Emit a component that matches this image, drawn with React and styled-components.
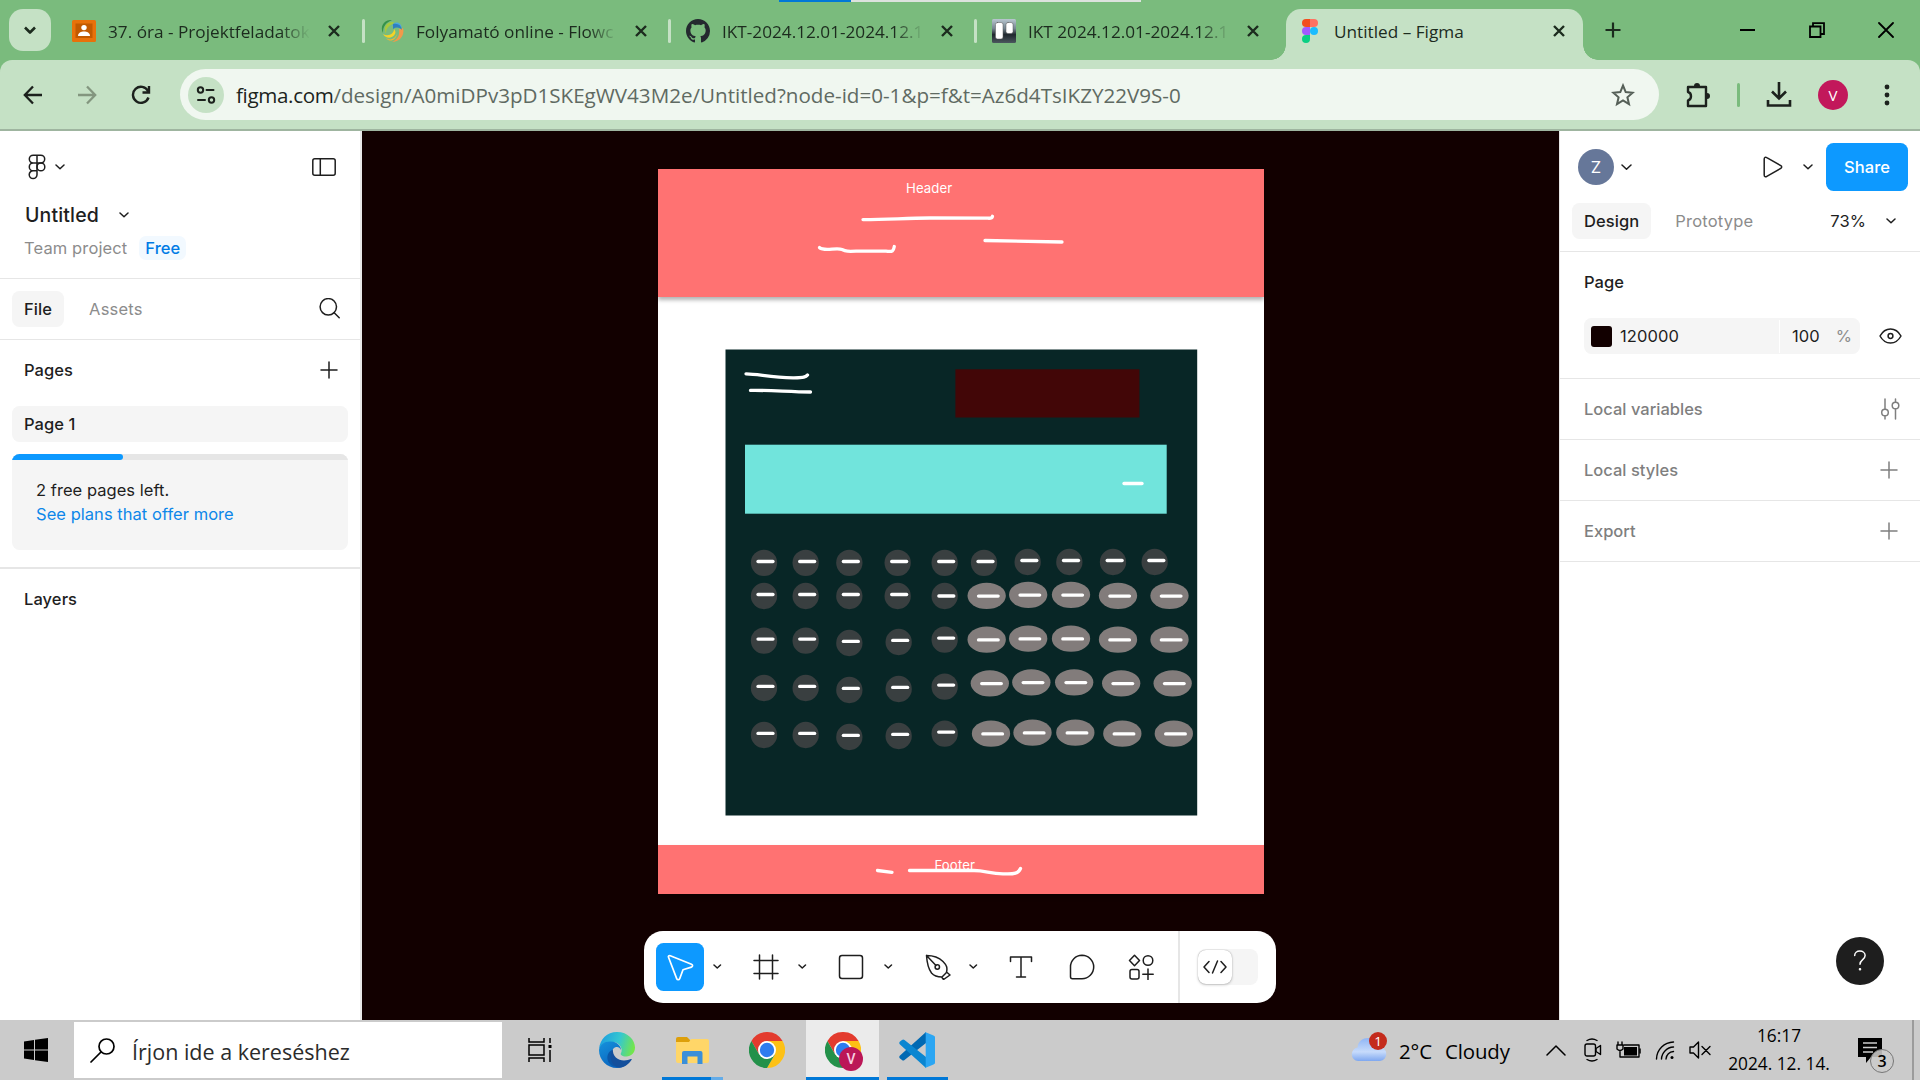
import React from "react";
import styled, { createGlobalStyle } from "styled-components";

const GlobalStyle = createGlobalStyle`
  *, *::before, *::after { box-sizing: border-box; }
  html, body { margin: 0; padding: 0; overflow: hidden; }
  svg { display: block; flex: none; }
`;

const system = `"Open Sans", "Noto Sans", sans-serif`;
const inter = `Inter, "Liberation Sans", sans-serif`;

const Screen = styled.div`
  width: 1920px;
  height: 1080px;
  display: flex;
  flex-direction: column;
  background: #fff;
  overflow: hidden;
`;

/* ---------- Browser chrome ---------- */

const TabStrip = styled.header`
  position: relative;
  display: flex;
  height: 60px;
  flex: none;
  background: #7abb7d;
  font-family: ${system};
`;

const ShareStrip = styled.div`
  position: absolute;
  top: 0;
  left: 779px;
  width: 362px;
  height: 2px;
  background: linear-gradient(to right, #0078d7 72px, #dde2de 72px);
`;

const TabSearch = styled.div`
  width: 42px;
  height: 42px;
  margin: 9px 9px 0;
  display: flex;
  align-items: center;
  justify-content: center;
  border-radius: 14px;
  background: #c5e1c5;
`;

const Tab = styled.div`
  position: relative;
  flex: none;
  width: 306px;
  padding-top: 9px;
`;

const TabBody = styled.div`
  position: relative;
  display: flex;
  align-items: center;
  height: ${(p) => (p.$active ? 51 : 43)}px;
  margin: 0 7px 0 2px;
  padding-left: ${(p) => (p.$first ? 10 : 12)}px;
  border-radius: 15px 15px 0 0;
  background: ${(p) => (p.$active ? "#c5e1c5" : "transparent")};
  padding-bottom: ${(p) => (p.$active ? 8 : 0)}px;
  &::before, &::after {
    content: "";
    display: ${(p) => (p.$active ? "block" : "none")};
    position: absolute;
    bottom: 0;
    width: 15px;
    height: 15px;
  }
  &::before { left: -15px; background: radial-gradient(circle at 0 0, transparent 14.5px, #c5e1c5 15px); }
  &::after { right: -15px; background: radial-gradient(circle at 100% 0, transparent 14.5px, #c5e1c5 15px); }
`;

const TabTitle = styled.div`
  flex: none;
  width: ${(p) => (p.$first ? 201 : 200)}px;
  margin: 2px 18px 0 12px;
  white-space: nowrap;
  font-size: 17.2px;
  line-height: 26px;
  color: #1c2b1e;
  -webkit-mask-image: ${(p) => (p.$fade ? "linear-gradient(to right, #000 172px, transparent 202px)" : "none")};
`;

const Favicon = styled.div`
  flex: none;
  width: 24px;
  height: 24px;
  display: flex;
  align-items: center;
  justify-content: center;
`;

const TabDivider = styled.div`
  position: absolute;
  left: 302px;
  top: 19px;
  width: 3px;
  height: 24px;
  border-radius: 2px;
  background: #c5e1c5;
`;

const NewTab = styled.div`
  width: 46px;
  height: 60px;
  display: flex;
  align-items: center;
  justify-content: center;
`;

const WindowButtons = styled.div`
  display: flex;
  margin-left: auto;
`;

const WindowButton = styled.div`
  width: 69px;
  height: 60px;
  display: flex;
  align-items: center;
  justify-content: center;
`;

const ToolbarBack = styled.div`
  flex: none;
  position: relative;
  z-index: 1;
  background: #7abb7d;
  box-shadow: 0 1px 0 #9fb5a0;
`;

const AddressRow = styled.div`
  display: flex;
  align-items: center;
  height: 70px;
  padding-left: 6px;
  border-bottom: 1px solid #9fb5a0;
  border-radius: 12px 12px 0 0;
  background: #c5e1c5;
  font-family: ${system};
`;

const NavButton = styled.div`
  flex: none;
  width: ${(p) => p.$w || 54}px;
  margin-left: ${(p) => p.$ml || 0}px;
  display: flex;
  align-items: center;
  justify-content: center;
`;

const Omnibox = styled.div`
  flex: none;
  display: flex;
  align-items: center;
  width: 1479px;
  height: 51px;
  margin-left: 12px;
  padding: 0 24px 0 8px;
  border-radius: 26px;
  background: #f0f7f0;
`;

const SiteInfo = styled.div`
  width: 36px;
  height: 36px;
  display: flex;
  align-items: center;
  justify-content: center;
  border-radius: 50%;
  background: #c5e1c5;
`;

const Url = styled.div`
  flex: 1;
  margin-left: 12px;
  font-size: 20.6px;
  line-height: 30px;
  color: #5f6a62;
  white-space: nowrap;
  b { font-weight: 400; color: #1b241d; letter-spacing: -0.35px; }
`;

const BarDivider = styled.div`
  flex: none;
  width: 3px;
  height: 24px;
  margin-left: 24px;
  border-radius: 2px;
  background: #7abb7d;
`;

const ProfileBadge = styled.div`
  flex: none;
  width: 30px;
  height: 30px;
  margin-left: 26px;
  border-radius: 50%;
  background: #c2185b;
  color: #fff;
  font: 15px/30px ${system};
  text-align: center;
`;

/* ---------- Editor ---------- */

const Editor = styled.main`
  display: flex;
  height: 890px;
  flex: none;
  font-family: ${inter};
  font-size: 16.5px;
  letter-spacing: 0.08px;
  color: #1e1e1e;
`;

const LeftPanel = styled.aside`
  width: 362px;
  flex: none;
  background: #fff;
  border-right: 2px solid #e9e9e9;
`;

const RightPanel = styled.aside`
  position: relative;
  width: 361px;
  flex: none;
  background: #fff;
  border-left: 1px solid #e6e6e6;
`;

const Row = styled.div`
  display: flex;
  align-items: center;
  height: ${(p) => p.$h}px;
  margin-top: ${(p) => p.$mt || 0}px;
  padding: 0 ${(p) => p.$pr || 0}px ${(p) => p.$pb || 0}px ${(p) => p.$pl || 0}px;
  border-bottom: ${(p) => (p.$line ? `${p.$line}px solid #e6e6e6` : "none")};
  gap: ${(p) => p.$gap || 0}px;
`;

const Spacer = styled.div`
  flex: 1;
`;

const FileHead = styled.div`
  height: 149px;
  padding-top: 18px;
  border-bottom: 1px solid #e6e6e6;
`;

const FileName = styled.div`
  font-size: 19.5px;
  font-weight: 500;
  letter-spacing: 0.15px;
`;

const Muted = styled.span`
  color: ${(p) => (p.$soft ? "#8c8c8c" : "#7f7f7f")};
  font-weight: ${(p) => p.$weight || 400};
  letter-spacing: ${(p) => p.$ls ?? 0.12}px;
`;

const Strong = styled.span`
  font-weight: 500;
`;

const FreeBadge = styled.span`
  height: 24px;
  padding: 0 6px;
  border-radius: 7px;
  background: #f2f9ff;
  color: #007be5;
  line-height: 24px;
  font-weight: 450;
`;

const Pill = styled.span`
  height: 36px;
  padding: 0 12px;
  border-radius: 7.5px;
  background: #f5f5f5;
  font-weight: 500;
  line-height: 36px;
`;

const PageItem = styled.div`
  height: 36px;
  margin: 7px 12px 12px;
  padding: 0 12px;
  border-radius: 7.5px;
  background: #f5f5f5;
  font-weight: 500;
  line-height: 36px;
`;

const PlanCard = styled.div`
  height: 96px;
  margin: 0 12px;
  border-radius: 7.5px;
  overflow: hidden;
  background: #f5f5f5;
`;

const Meter = styled.div`
  height: 6px;
  background: #e6e6e6;
`;

const MeterFill = styled.div`
  width: 33%;
  height: 6px;
  border-radius: 0 4px 4px 0;
  background: #0d99ff;
`;

const PlanText = styled.p`
  margin: 18px 24px 0;
  line-height: 24px;
  letter-spacing: 0.04px;
  a { display: block; color: #0d87e9; }
`;

const PagesBlock = styled.section`
  height: 229px;
  border-bottom: 2px solid #e6e6e6;
`;

const UserBadge = styled.div`
  width: 36px;
  height: 36px;
  border-radius: 50%;
  background: #667799;
  color: #fff;
  font-size: 16.5px;
  line-height: 36px;
  text-align: center;
`;

const PlayButton = styled.div`
  margin-right: 7px;
`;

const ZoomLevel = styled.div`
  display: flex;
  align-items: center;
  gap: 20px;
`;

const ShareButton = styled.div`
  width: 82px;
  height: 48px;
  border-radius: 7.5px;
  background: #0d99ff;
  color: #fff;
  font-weight: 500;
  line-height: 48px;
  text-align: center;
`;

const PageBlock = styled.section`
  height: 127px;
  border-bottom: 1px solid #e6e6e6;
`;

const ColorField = styled.div`
  display: flex;
  align-items: center;
  width: 276px;
  height: 36px;
  border-radius: 7.5px;
  background: #f5f5f5;
`;

const Swatch = styled.div`
  width: 21px;
  height: 21px;
  margin: 0 8px 0 7px;
  border-radius: 3px;
  background: #120000;
`;

const Hex = styled.div`
  width: 159px;
`;

const Opacity = styled.div`
  display: flex;
  gap: 16px;
  padding-left: 12px;
  height: 33px;
  align-items: center;
  border-left: 1px solid #fff;
`;

const Help = styled.div`
  position: absolute;
  right: 36px;
  bottom: 35px;
  width: 48px;
  height: 48px;
  display: flex;
  align-items: center;
  justify-content: center;
  border-radius: 50%;
  background: #1e1e1e;
`;

/* ---------- Canvas ---------- */

const Canvas = styled.div`
  position: relative;
  flex: 1;
  background: #120000;
  overflow: hidden;
`;

const Artboard = styled.div`
  position: absolute;
  left: 296px;
  top: 39px;
  width: 606px;
  height: 724.5px;
  background: #fff;
`;

const Band = styled.div`
  position: absolute;
  left: 0;
  top: ${(p) => p.$top}px;
  width: 606px;
  height: ${(p) => p.$h}px;
  background: #ff7272;
  box-shadow: 0 3px 4px rgba(0, 0, 0, 0.3);
`;

const BandLabel = styled.div`
  position: absolute;
  left: ${(p) => p.$x}px;
  top: ${(p) => p.$y}px;
  color: #fff;
  font-size: 13.2px;
  line-height: 16px;
  letter-spacing: 0.1px;
`;

const Sketch = styled.svg`
  position: absolute;
  left: 0;
  top: 0;
`;

const ToolDock = styled.div`
  position: absolute;
  left: 282px;
  top: 801px;
  display: flex;
  align-items: center;
  width: 632px;
  height: 72px;
  padding-left: 12px;
  border-radius: 19px;
  background: #fff;
`;

const Tool = styled.div`
  flex: none;
  width: 48px;
  height: 48px;
  display: flex;
  align-items: center;
  justify-content: center;
  border-radius: 7.5px;
  margin-right: ${(p) => p.$mr || 0}px;
  background: ${(p) => (p.$active ? "#0d99ff" : "transparent")};
`;

const ToolMore = styled.div`
  flex: none;
  width: ${(p) => p.$w || 25}px;
  margin-right: ${(p) => p.$mr || 12}px;
  display: flex;
  justify-content: center;
`;

const DockDivider = styled.div`
  width: 2px;
  height: 72px;
  margin-left: 13px;
  background: #e6e6e6;
`;

const DevToggle = styled.div`
  width: 60px;
  height: 36px;
  margin-left: 18px;
  border-radius: 8px;
  background: #f5f5f5;
  display: flex;
  align-items: center;
`;

const DevKnob = styled.div`
  width: 34px;
  height: 34px;
  display: flex;
  align-items: center;
  justify-content: center;
  border-radius: 8px;
  background: #fff;
  box-shadow: 0 0 1px rgba(0, 0, 0, 0.35), 0 1px 3px rgba(0, 0, 0, 0.2);
`;

/* ---------- Taskbar ---------- */

const Taskbar = styled.footer`
  display: flex;
  height: 60px;
  flex: none;
  background: #cbcbcb;
  font-family: ${system};
  color: #000;
`;

const TaskCell = styled.div`
  position: relative;
  flex: none;
  width: ${(p) => p.$w}px;
  height: 60px;
  padding-right: ${(p) => p.$pr || 0}px;
  display: flex;
  align-items: center;
  justify-content: center;
  background: ${(p) => (p.$active ? "#ebebeb" : "transparent")};
`;

const Underline = styled.div`
  position: absolute;
  bottom: 0;
  left: ${(p) => p.$x || 0}px;
  width: ${(p) => p.$w}px;
  height: 3px;
  background: ${(p) => (p.$soft ? "#64ace8" : "#0078d7")};
`;

const AccountMark = styled.svg`
  position: absolute;
  left: 33px;
  top: 27px;
`;

const SearchBox = styled.div`
  flex: none;
  display: flex;
  align-items: center;
  width: 428px;
  height: 56px;
  margin-top: 2px;
  padding-left: 16px;
  background: #fff;
  color: #2b2b2b;
  font-size: 21.5px;
  gap: 17px;
  span { padding-top: 2px; }
`;

const Tray = styled.div`
  display: flex;
  align-items: center;
  width: 569px;
  margin-left: auto;
  height: 60px;
`;

const WeatherIcon = styled.div`
  flex: none;
  width: 36px;
  height: 60px;
`;

const WeatherText = styled.div`
  flex: none;
  display: flex;
  gap: 13px;
  width: 148px;
  margin-left: 12px;
  margin-top: 2px;
  font-size: 20.4px;
  letter-spacing: -0.1px;
  white-space: nowrap;
`;

const TrayCell = styled.div`
  flex: none;
  width: ${(p) => p.$w}px;
  padding-left: ${(p) => p.$pl || 0}px;
  padding-top: ${(p) => p.$pt || 0}px;
  display: flex;
  justify-content: center;
`;

const Clock = styled.div`
  flex: none;
  width: 110px;
  margin-left: 19px;
  font-size: 17.3px;
  line-height: 28px;
  text-align: center;
  white-space: nowrap;
`;

const ShowDesktop = styled.div`
  width: 8px;
  height: 60px;
  margin-left: auto;
  border-left: 2px solid #9b9b9b;
`;

/* ---------- Icons ---------- */

const Icon = ({ w, h = w, vb, color = "#1e1e1e", sw = 1.5, fill = "none", children }) => (
  <svg
    width={w}
    height={h}
    viewBox={vb || `0 0 ${w} ${h}`}
    fill={fill}
    stroke={color}
    strokeWidth={sw}
    strokeLinecap="round"
    strokeLinejoin="round"
  >
    {children}
  </svg>
);

const Chevron = ({ w = 8, color }) => (
  <Icon w={w + 2} h={w / 2 + 2} color={color}>
    <path d={`M1 1 L${w / 2 + 1} ${w / 2 + 0.7} L${w + 1} 1`} />
  </Icon>
);

const Plus = ({ color }) => (
  <Icon w={18} color={color}>
    <path d="M9 1v16M1 9h16" />
  </Icon>
);

const CloseX = () => (
  <Icon w={14} color="#1c2b1e" sw={2.4}>
    <path d="M2 2l10 10M12 2L2 12" strokeLinecap="butt" />
  </Icon>
);

const ClassroomIcon = () => (
  <Icon w={24} h={22} color="none">
    <rect width="24" height="22" rx="1.5" fill="#e8710a" />
    <rect x="3.5" y="3.5" width="17" height="14.5" fill="#c25a00" />
    <circle cx="12" cy="7.6" r="2.7" fill="#fff" />
    <path d="M6 16c0-3 3-4.4 6-4.4s6 1.400 6 4.400z" fill="#fff" />
  </Icon>
);

const SwirlIcon = () => (
  <Icon w={24} color="none">
    <path d="M12 7C15 1 21 3 22 9c-3-3-6-3-10-2z" fill="#4da7dd" />
    <path d="M10 1C3 2 0 8 3 14c0-6 2-10 9-13z" fill="#35924a" />
    <path d="M13 3C6 3 3 9 6 15c0-5 2-8 8-11z" fill="#a7c93c" />
    <path d="M3 15c3 5 9 5 12 0 1-2 0-4-1-5 0 5-6 8-11 5z" fill="#f5d327" />
    <path d="M23 9c2 7-3 14-11 14 5-2 8-6 7-13 1 0 3 0 4-1z" fill="#f2994a" />
    <path d="M13 5c5-1 8 1 9 6-3-3-6-3-9-1z" fill="#2f7fc1" />
    <path d="M6 19c4 3 9 1 11-4-1 6-7 9-11 4z" fill="#f2b632" />
  </Icon>
);

const GithubIcon = () => (
  <svg width="24" height="24" viewBox="0 0 16 16" fill="#24292f">
    <path d="M8 0C3.580 0 0 3.580 0 8c0 3.540 2.290 6.530 5.470 7.590.4.070.550-.170.550-.380 0-.190-.010-.820-.010-1.490-2.010.370-2.530-.490-2.690-.940-.090-.230-.480-.940-.820-1.130-.280-.150-.680-.520-.010-.530.630-.010 1.080.580 1.230.820.720 1.210 1.870.870 2.330.660.070-.520.280-.870.510-1.070-1.780-.200-3.640-.890-3.640-3.950 0-.870.310-1.590.820-2.150-.080-.200-.360-1.020.080-2.120 0 0 .670-.210 2.200.820.640-.180 1.320-.270 2-.270s1.360.090 2 .270c1.530-1.040 2.200-.820 2.200-.820.440 1.100.160 1.920.080 2.120.510.560.820 1.270.820 2.150 0 3.070-1.870 3.750-3.650 3.950.290.250.540.730.540 1.480 0 1.070-.010 1.930-.010 2.200 0 .210.150.460.550.380A8.010 8.010 0 0 0 16 8c0-4.420-3.580-8-8-8z" />
  </svg>
);

const TrelloIcon = () => (
  <Icon w={24} color="none">
    <defs>
      <linearGradient id="photo" x1="0" y1="0" x2="0" y2="1">
        <stop offset="0" stopColor="#b9c7d0" />
        <stop offset=".4" stopColor="#75858f" />
        <stop offset=".65" stopColor="#20282e" />
        <stop offset="1" stopColor="#4b575e" />
      </linearGradient>
    </defs>
    <rect width="24" height="24" rx="1.5" fill="url(#photo)" />
    <rect x="3.500" y="3.500" width="7.500" height="16.500" rx="2" fill="#fff" stroke="#555" strokeWidth=".5" />
    <rect x="14" y="3.500" width="7" height="11" rx="2" fill="#fff" stroke="#555" strokeWidth=".5" />
  </Icon>
);

const FigmaIcon = () => (
  <Icon w={16} h={24} vb="0 0 16 24" color="none">
    <path d="M4 0h4v8H4a4 4 0 0 1 0-8z" fill="#f24e1e" />
    <path d="M8 0h4a4 4 0 0 1 0 8H8z" fill="#ff7262" />
    <path d="M4 8h4v8H4a4 4 0 0 1 0-8z" fill="#a259ff" />
    <circle cx="12" cy="12" r="4" fill="#1abcfe" />
    <path d="M4 16h4v4a4 4 0 1 1-4-4z" fill="#0acf83" />
  </Icon>
);

const ChromeLogo = () => (
  <svg width="36" height="36" viewBox="0 0 36 36">
    <path d="M18 9 H33.590 A18 18 0 0 1 18 36 L25.800 22.500z" fill="#fdc116" />
    <path d="M2.410 9 A18 18 0 0 1 33.590 9 H18 L10.200 22.500z" fill="#e33b2e" />
    <path d="M2.410 9 L10.200 22.500 L18 27 L25.800 22.500 L18 36 A18 18 0 0 1 2.410 9z" fill="#23914a" />
    <circle cx="18" cy="18" r="9" fill="#fff" />
    <circle cx="18" cy="18" r="7.200" fill="#2d7cee" />
  </svg>
);

const EdgeLogo = () => (
  <svg width="36" height="36" viewBox="0 0 36 36">
    <defs>
      <linearGradient id="eTop" x1="0" y1=".3" x2="1" y2=".5">
        <stop offset="0" stopColor="#1c9de0" />
        <stop offset=".55" stopColor="#35c7d0" />
        <stop offset="1" stopColor="#74e64a" />
      </linearGradient>
      <linearGradient id="eLeft" x1="0" y1="0" x2=".6" y2="1">
        <stop offset="0" stopColor="#1592dc" />
        <stop offset="1" stopColor="#0a62bd" />
      </linearGradient>
    </defs>
    <path d="M0 17C1 7 8 0 18 0c11 0 18 8 18 15.500 0 5.500-4 9-8.500 9-5 0-6.500-2-5.500-3.500 2-3 0-11-9-11C7 10 2 13 0 17z" fill="url(#eTop)" />
    <path d="M0 18C1 12 6 9 12 9.500c7 .5 10 5 10 8.500-1-2.500-3-3.500-5-3-5 1.500-6 9-1 14 3 3.500 8 4.500 12 3.500-3 2.500-7 3.500-10 3.500C8 36 0 28 0 18z" fill="url(#eLeft)" />
    <path d="M13 18c-1.500 8 6 13.500 12 13.500-4 3.500-9 4-13 1.500-5-4-5-12 1-15z" fill="#0b57a8" />
    <path d="M14 17c-1 7 5 11.500 11 11.500 3 0 5-1 7-1.500.5-.3 1 .2.600.8C30 32 25.500 35.500 20 35.800 12 34 9 23 14 17z" fill="#134f9c" />
  </svg>
);

const ExplorerLogo = () => (
  <svg width="33" height="27" viewBox="0 0 33 27">
    <path d="M0 2a2 2 0 0 1 2-2h9l4 4v4H0z" fill="#dd9f0a" />
    <path d="M0 5h13l2-3h16a2 2 0 0 1 2 2v20a2 2 0 0 1-2 2H2a2 2 0 0 1-2-2z" fill="#ffd668" />
    <path d="M6 27V16a2 2 0 0 1 2-2h16.500a2 2 0 0 1 2 2v11h-5v-7.500h-10V27z" fill="#3a8fd9" />
  </svg>
);

const CodeLogo = () => (
  <svg width="36" height="36" viewBox="0 0 36 36">
    <path d="M27 0 1 23.500c-1 1-1 2 0 3l2 1.500c.8.700 1.700.700 2.500 0L27 11z" fill="#0069b3" />
    <path d="M27 36 1 12.500c-1-1-1-2 0-3L3 8c.8-.7 1.700-.7 2.500 0L27 25z" fill="#0a86d1" />
    <path d="M26 0l8.500 3.500c1 .5 1.500 1 1.500 2v25c0 1-.5 1.500-1.500 2L26 36c.6-.8.7-1.300.7-2V2c0-.8-.2-1.300-.7-2z" fill="#2ba6f3" />
  </svg>
);

/* ---------- Data ---------- */

const tabs = [
  { title: "37. óra - Projektfeladatok", icon: <ClassroomIcon /> },
  { title: "Folyamató online - Flowc", icon: <SwirlIcon /> },
  { title: "IKT-2024.12.01-2024.12.1", icon: <GithubIcon /> },
  { title: "IKT 2024.12.01-2024.12.1", icon: <TrelloIcon /> },
  { title: "Untitled – Figma", icon: <FigmaIcon />, active: true },
];

/* Calculator keys: [x, y, dash x, dash y, wide], in thirds of a canvas pixel */
const keys = [
  ...[132, 257, 388, 533, 674, 792].map((x) => [x, 98.5, x + 4.5, 94.5]),
  ...[923, 1048, 1179, 1304].map((x) => [x, 96, x + 5, 91.5]),
  ...[132, 257, 388, 533].map((x) => [x, 198, x + 4.5, 193.5]),
  [674, 198, 679, 198],
];

[
  [332, 332, 339, 336, 329],
  [474, 474, 480, 477, 470],
  [615, 615, 621, 618, 611],
].forEach((ys) => [132, 257, 388, 536, 674].forEach((x, i) => keys.push([x, ys[i], x + 4.5, ys[i] - 4.7])));

[
  [0, 197.5],
  [0, 329],
  [9.5, 460],
  [13, 611],
].forEach(([dx, y]) =>
  [800, 924.5, 1053, 1194, 1348.5].forEach((x, i) => {
    const ky = i === 1 || i === 2 ? y - 3 : y;
    keys.push([x + dx, ky, x + dx + 5, ky + 0.7, true]);
  })
);

/* ---------- Views ---------- */

const BrowserChrome = () => (
  <>
    <TabStrip>
      <ShareStrip />
      <TabSearch>
        <Icon w={14} h={9} color="#1c2b1e" sw={2.6}>
          <path d="M2 1.500l5 5 5-5" strokeLinecap="butt" />
        </Icon>
      </TabSearch>
      {tabs.map((t, i) => (
        <Tab key={t.title}>
          <TabBody $active={t.active} $first={i === 0}>
            <Favicon>{t.icon}</Favicon>
            <TabTitle $fade={!t.active} $first={i === 0}>{t.title}</TabTitle>
            <CloseX />
          </TabBody>
          {i < 3 && <TabDivider />}
        </Tab>
      ))}
      <NewTab>
        <Icon w={16} color="#1c2b1e" sw={2.2}>
          <path d="M8 .5v15M.5 8h15" strokeLinecap="butt" />
        </Icon>
      </NewTab>
      <WindowButtons>
        <WindowButton>
          <Icon w={15} color="#000" sw={2}>
            <path d="M0 7h15" strokeLinecap="butt" />
          </Icon>
        </WindowButton>
        <WindowButton>
          <Icon w={16} color="#000" sw={1.8}>
            <path d="M1 4.500h10.500V15H1zM4 4.500V1.200h11V12h-3.500" strokeLinejoin="miter" />
          </Icon>
        </WindowButton>
        <WindowButton>
          <Icon w={16} color="#000" sw={1.8}>
            <path d="M1 1l14 14M15 1L1 15" />
          </Icon>
        </WindowButton>
      </WindowButtons>
    </TabStrip>
    <ToolbarBack>
      <AddressRow>
        <NavButton>
          <Icon w={20} color="#1c211d" sw={2.3}>
            <path d="M19 10H2M10 1.500L1.800 10l8.200 8.500" strokeLinecap="butt" strokeLinejoin="miter" />
          </Icon>
        </NavButton>
        <NavButton>
          <Icon w={20} color="#83967f" sw={2.3}>
            <path d="M1 10h17M10 1.500l8.200 8.500-8.200 8.500" strokeLinecap="butt" strokeLinejoin="miter" />
          </Icon>
        </NavButton>
        <NavButton>
          <Icon w={20} color="#1c211d" sw={2.4}>
            <path d="M17.500 12.500A8 8 0 1 1 17 6M18 1v6.500h-6.500" strokeLinecap="butt" strokeLinejoin="miter" />
          </Icon>
        </NavButton>
        <Omnibox>
          <SiteInfo>
            <Icon w={20} color="#1c211d" sw={2}>
              <circle cx="4.500" cy="5" r="2.700" />
              <path d="M10.500 5h7M2 15h7" />
              <circle cx="15.500" cy="15" r="2.700" />
            </Icon>
          </SiteInfo>
          <Url>
            <b>figma.com</b>/design/A0miDPv3pD1SKEgWV43M2e/Untitled?node-id=0-1&amp;p=f&amp;t=Az6d4TsIKZY22V9S-0
          </Url>
          <Icon w={24} color="#566058" sw={2}>
            <path d="M12 2.500l2.700 6.600 7 .6-5.300 4.600 1.600 6.900-6-3.700-6 3.700 1.600-6.900L2.300 9.700l7-.6z" strokeLinejoin="miter" />
          </Icon>
        </Omnibox>
        <NavButton $w={30} $ml={24}>
          <Icon w={26} color="#1c211d" sw={2.4}>
            <path d="M3 5h18v19H3v-5.500c4-1 4-7.500 0-8.500z" />
            <path d="M9 4a3 3 0 0 1 6 0zM22 11a3 3 0 0 1 0 6z" fill="#1c211d" stroke="none" />
          </Icon>
        </NavButton>
        <BarDivider />
        <NavButton $w={26} $ml={26}>
          <Icon w={26} h={25} color="#1c211d" sw={2.6}>
            <path d="M13 0v16M6 9.500l7 7 7-7M2 18v5.500h22V18" strokeLinecap="butt" strokeLinejoin="miter" />
          </Icon>
        </NavButton>
        <ProfileBadge>V</ProfileBadge>
        <NavButton $w={66} $ml={6}>
          <Icon w={6} h={22} color="none" fill="#1c211d">
            <circle cx="3" cy="3" r="2.400" />
            <circle cx="3" cy="11" r="2.400" />
            <circle cx="3" cy="19" r="2.400" />
          </Icon>
        </NavButton>
      </AddressRow>
    </ToolbarBack>
  </>
);

const Sidebar = () => (
  <LeftPanel>
    <FileHead>
      <Row $h={38} $pl={28} $pr={24} $gap={9}>
        <Icon w={18} h={26}>
          <path d="M9 1.200H5.200a3.800 3.800 0 0 0 0 7.800H9zM9 1.200h3.800a3.800 3.800 0 0 1 0 7.800H9M9 9H5.200a3.800 3.800 0 0 0 0 7.800H9zM5.200 16.800A3.900 3.900 0 1 0 9 20.700V9" />
          <circle cx="12.900" cy="12.900" r="3.900" />
        </Icon>
        <Chevron />
        <Spacer />
        <Icon w={24} h={18}>
          <rect x=".8" y=".8" width="22.400" height="16.400" rx="2" />
          <path d="M8.300 1v16" />
        </Icon>
      </Row>
      <Row $h={58} $pl={25} $gap={20}>
        <FileName>Untitled</FileName>
        <Chevron />
      </Row>
      <Row $h={24} $pl={24} $gap={12} $mt={-8}>
        <Muted $soft>Team project</Muted>
        <FreeBadge>Free</FreeBadge>
      </Row>
    </FileHead>
    <Row $h={61} $pl={12} $pr={20} $gap={25} $line={1}>
      <Pill>File</Pill>
      <Muted $soft $ls={0.2}>Assets</Muted>
      <Spacer />
      <Icon w={21} h={23} vb="0 1 21 23">
        <circle cx="9.300" cy="9.800" r="8.200" />
        <path d="M15.200 15.700l5 5" />
      </Icon>
    </Row>
    <PagesBlock>
      <Row $h={59} $pl={24} $pr={22}>
        <Strong>Pages</Strong>
        <Spacer />
        <Plus />
      </Row>
      <PageItem>Page 1</PageItem>
      <PlanCard>
        <Meter>
          <MeterFill />
        </Meter>
        <PlanText>
          2 free pages left.
          <a>See plans that offer more</a>
        </PlanText>
      </PlanCard>
    </PagesBlock>
    <Row $h={60} $pl={24}>
      <Strong>Layers</Strong>
    </Row>
  </LeftPanel>
);

const Drawing = () => (
  <Artboard>
    <Band $top={676} $h={48.5} />
    <Band $top={0} $h={128} />
    <BandLabel $x={248} $y={11}>Header</BandLabel>
    <BandLabel $x={276.5} $y={688}>Footer</BandLabel>
    <Sketch width="606" height="724" viewBox="658 169 606 724">
      <rect x="725.500" y="349.500" width="471.700" height="466" fill="#082626" />
      <rect x="955.400" y="369.300" width="184" height="48.200" fill="#420607" />
      <rect x="745" y="444.700" width="421.700" height="69" fill="#71e4dc" />
      <g transform="translate(720 530) scale(0.33333)">
        {keys.map(([x, y, , , wide], i) => (
          <ellipse key={i} cx={x} cy={y} rx={wide ? 57.5 : 39.5} ry="39.500" fill={wide ? "#827c7b" : "#393f40"} />
        ))}
        <g stroke="#fff" strokeWidth="9.800" strokeLinecap="round">
          {keys.map(([, , x, y, wide], i) => (
            <path key={i} d={`M${x - (wide ? 29.5 : 22.5)} ${y}H${x + (wide ? 29.5 : 22.5)}`} />
          ))}
        </g>
      </g>
      <g fill="none" stroke="#fff" strokeWidth="3.300" strokeLinecap="round" strokeLinejoin="round">
        <path d="M863 219.600C890 219.600 905 218 930 218L988 218.200Q992 218.500 992.500 216.300" />
        <path d="M819.500 247.600C825 252 836 247 842 249.500C846 251.500 848 251.500 856 251.200L886 251.200C893 252 893.500 251 894.300 246.500" />
        <path d="M985 240.500L1062 242" />
        <path d="M746 373.800C758 373.800 770 377.500 793 377.900C804 378 806 377 807.500 375" />
        <path d="M750.500 390.400C770 390 790 392 810.500 392" />
        <path d="M1124 483.500H1142" />
        <path d="M877.500 870.500L892 872.300" />
        <path d="M909.500 870.500H974C985 870.500 990 873.500 1003 873.800C1015 874.500 1018.500 873 1020.500 868.500" />
      </g>
    </Sketch>
  </Artboard>
);

const Dock = () => (
  <ToolDock>
    <Tool $active>
      <Icon w={27} color="#fff" sw={1.7}>
        <path d="M1.500 3.300C1 2 2 1.200 3.300 1.700L24.500 10.200c1.500.7 1.400 2.400-.1 2.900L16 15.700 12.700 24.700c-.6 1.400-2.400 1.400-3-.1z" />
      </Icon>
    </Tool>
    <ToolMore $w={27} $mr={11}><Chevron w={6.5} /></ToolMore>
    <Tool>
      <Icon w={26}>
        <path d="M6.500 1v24M19.500 1v24M1 6.500h24M1 19.500h24" />
      </Icon>
    </Tool>
    <ToolMore><Chevron w={6.5} /></ToolMore>
    <Tool>
      <Icon w={26}>
        <rect x="1.500" y="1.500" width="23" height="23" rx="2.500" />
      </Icon>
    </Tool>
    <ToolMore $w={27} $mr={12}><Chevron w={6.5} /></ToolMore>
    <Tool>
      <Icon w={26}>
        <path d="M1.500 1.500C10 1.500 15 4.500 18 7.500c4 4 4.500 6.500 3.500 11L17 23c-5 0-8-1-10.500-4C3.500 15 2 9 1.500 1.500zM1.500 1.500l9.500 10M21.500 18l3.500 3-6.500 4.500-2-2.500" />
        <circle cx="12.300" cy="13" r="2.200" />
      </Icon>
    </Tool>
    <ToolMore $w={23} $mr={12}><Chevron w={6.5} /></ToolMore>
    <Tool $mr={13}>
      <Icon w={24}>
        <path d="M1.500 6.500V2h21v4.500M12 2v20M7.500 22h9" />
      </Icon>
    </Tool>
    <Tool $mr={11}>
      <Icon w={26}>
        <path d="M13 1.300A11.700 11.700 0 1 1 13 24.700H3.500a2 2 0 0 1-2-2V13A11.600 11.600 0 0 1 13 1.300z" />
      </Icon>
    </Tool>
    <Tool>
      <Icon w={26}>
        <path d="M6.500 1.200l5 5.300-5 5.300-5-5.300zM20 15v10.500M14.800 20.200h10.400" />
        <circle cx="20" cy="6.500" r="4.800" />
        <rect x="2" y="15.500" width="9" height="9.500" rx="2" />
      </Icon>
    </Tool>
    <DockDivider />
    <DevToggle>
      <DevKnob>
        <Icon w={24} h={16}>
          <path d="M6 2.500L1 8l5 5.500M18 2.500L23 8l-5 5.500M14.500 2l-5 12" />
        </Icon>
      </DevKnob>
    </DevToggle>
  </ToolDock>
);

const Inspector = () => (
  <RightPanel>
    <Row $h={74} $pl={18} $pr={12}>
      <UserBadge>Z</UserBadge>
      <NavButton $w={25}><Chevron w={9} /></NavButton>
      <Spacer />
      <PlayButton>
        <Icon w={20} h={22}>
          <path d="M1.200 3c0-1.700 1.300-2.200 2.600-1.400L17.800 9.700c1.200.7 1.200 1.900 0 2.600L3.800 20.400C2.500 21.200 1.200 20.700 1.200 19z" />
        </Icon>
      </PlayButton>
      <NavButton $w={36}><Chevron w={8} /></NavButton>
      <ShareButton>Share</ShareButton>
    </Row>
    <Row $h={48} $pl={12} $pr={24} $pb={13} $gap={24} $line={1}>
      <Pill>Design</Pill>
      <Muted $soft $ls={0.2}>Prototype</Muted>
      <Spacer />
      <ZoomLevel>
        <span>73%</span>
        <Chevron />
      </ZoomLevel>
    </Row>
    <PageBlock>
      <Row $h={60} $pl={24}>
        <Strong>Page</Strong>
      </Row>
      <Row $h={48} $pl={24} $gap={19}>
        <ColorField>
          <Swatch />
          <Hex>120000</Hex>
          <Opacity>
            <span>100</span>
            <Muted $soft>%</Muted>
          </Opacity>
        </ColorField>
        <Icon w={23} h={16}>
          <path d="M1 8C3.500 3.500 7 1 11.500 1S19.500 3.500 22 8c-2.500 4.500-6 7-10.500 7S3.500 12.500 1 8z" />
          <circle cx="11.500" cy="8" r="2.400" />
        </Icon>
      </Row>
    </PageBlock>
    <Row $h={61} $pl={24} $pr={20} $line={1}>
      <Muted $weight={500} $ls={0}>Local variables</Muted>
      <Spacer />
      <Icon w={20} h={22} color="#7f7f7f">
        <path d="M5 1v10M5 18v3M15.500 1v3M15.500 11v10" />
        <circle cx="5" cy="14.500" r="3.300" />
        <circle cx="15.500" cy="7.500" r="3.300" />
      </Icon>
    </Row>
    {["Local styles", "Export"].map((t) => (
      <Row key={t} $h={61} $pl={24} $pr={22} $line={1}>
        <Muted $weight={500} $ls={0}>{t}</Muted>
        <Spacer />
        <Plus color="#7f7f7f" />
      </Row>
    ))}
    <Help>
      <Icon w={14} h={22} vb="0 0 14 24" color="#fff" sw={1.6}>
        <path d="M1.200 6c0-3 2.500-4.800 5.600-4.800S12.600 3 12.600 6c0 4.500-5.600 4.500-5.600 9.500" />
        <circle cx="7" cy="21" r=".6" fill="#fff" />
      </Icon>
    </Help>
  </RightPanel>
);

const WindowsTaskbar = () => (
  <Taskbar>
    <TaskCell $w={74} $pr={2}>
      <Icon w={24} color="none" fill="#000" vb="0 0 24 24">
        <path d="M0 3.400l10-1.400v9.400H0zM11 1.800L24 0v11.400H11zM0 12.500h10V22L0 20.600zM11 12.500h13V24l-13-1.800z" />
      </Icon>
    </TaskCell>
    <SearchBox>
      <Icon w={25} color="#000" sw={1.7}>
        <circle cx="16.500" cy="8.500" r="7.500" />
        <path d="M11 14L1 24" />
      </Icon>
      <span>Írjon ide a kereséshez</span>
    </SearchBox>
    <TaskCell $w={76}>
      <Icon w={24} color="#000" sw={1.5}>
        <path d="M1 0v4h15V0M1 24v-4h15v4M1 7h15v10H1zM22 0v5M22 12v12" strokeLinecap="butt" strokeLinejoin="miter" />
        <rect x="20.500" y="7" width="3" height="3" fill="#000" stroke="none" />
      </Icon>
    </TaskCell>
    <TaskCell $w={79} $pr={1}><EdgeLogo /></TaskCell>
    <TaskCell $w={71}>
      <ExplorerLogo />
      <Underline $x={5} $w={49} />
      <Underline $x={54} $w={12} $soft />
    </TaskCell>
    <TaskCell $w={78}><ChromeLogo /></TaskCell>
    <TaskCell $w={73} $active>
      <ChromeLogo />
      <Underline $w={73} />
      <AccountMark width="24" height="24" viewBox="0 0 24 24">
        <circle cx="12" cy="12" r="12" fill="#bb1757" />
        <text x="12" y="17" textAnchor="middle" fontFamily="Roboto" fontWeight="500" fontSize="14" fill="#f6cfe0">V</text>
      </AccountMark>
    </TaskCell>
    <TaskCell $w={76}>
      <CodeLogo />
      <Underline $x={8} $w={61} />
    </TaskCell>
    <Tray>
      <WeatherIcon>
        <svg width="40" height="60" viewBox="0 0 40 60">
          <defs>
            <linearGradient id="cloud" x1="0" y1="0" x2="0" y2="1">
              <stop offset="0" stopColor="#8fb5f5" />
              <stop offset=".6" stopColor="#c7dbfb" />
              <stop offset="1" stopColor="#7fa8f0" />
            </linearGradient>
          </defs>
          <path d="M7 41a6.800 6.800 0 0 1-.5-13.500C7 21 12 18 17 18c6 0 10 4 10.500 9A7 7 0 0 1 29 41z" fill="url(#cloud)" />
          <circle cx="27" cy="21" r="9" fill="#c42b1c" />
          <text x="27" y="26" textAnchor="middle" fontFamily="Open Sans" fontSize="13.500" fill="#fff">1</text>
        </svg>
      </WeatherIcon>
      <WeatherText>
        <span>2°C</span>
        <span>Cloudy</span>
      </WeatherText>
      <TrayCell $w={18}>
        <Icon w={20} h={11} color="#000"><path d="M1 10l9-9 9 9" /></Icon>
      </TrayCell>
      <TrayCell $w={56}>
        <Icon w={18} h={24} color="#000" sw={1.4}>
          <path d="M3 2.500q5-3 10 0M3 21.500q5 3 10 0" />
          <rect x="1" y="6" width="10.500" height="12" rx="2" />
          <path d="M12 10.500l4.500-3v9l-4.500-3z" />
        </Icon>
      </TrayCell>
      <TrayCell $w={15}>
        <Icon w={25} h={18} color="#000" sw={1.4}>
          <path d="M2 1v3M6 1v3M1 4h6v4q-3 3-6 0zM4 10v6h3M8 4h15v12H5" />
          <rect x="8" y="6" width="13" height="8.500" fill="#000" stroke="none" />
          <path d="M24 8v4" strokeWidth="1.500" />
        </Icon>
      </TrayCell>
      <TrayCell $w={58}>
        <Icon w={20} h={20} color="#000" sw={1.4}>
          <path d="M1.500 19A17.500 17.500 0 0 1 18.500 2M6.500 19A12.500 12.500 0 0 1 18.500 7M11 19A8 8 0 0 1 18.500 11.500" />
          <circle cx="17" cy="17.500" r="1.500" fill="#000" stroke="none" />
        </Icon>
      </TrayCell>
      <TrayCell $w={11}>
        <Icon w={22} h={18} color="#000" sw={1.4}>
          <path d="M1 6h3.500L9.500 1v16L4.500 12H1zM13 5.500l8 8M21 5.500l-8 8" />
        </Icon>
      </TrayCell>
      <Clock>
        16:17
        <br />
        2024. 12. 14.
      </Clock>
      <TrayCell $w={76} $pl={8} $pt={8}>
        <svg width="38" height="40" viewBox="0 0 38 40">
          <path d="M1 4h24v19H14l-5 6v-6H1z" fill="#000" />
          <path d="M6 9h14M6 13.500h14M6 18h10" stroke="#cbcbcb" strokeWidth="1.500" />
          <circle cx="25" cy="27" r="11.500" fill="#cbcbcb" fillOpacity=".88" stroke="#777" />
          <text x="25" y="32.500" textAnchor="middle" fontFamily="Open Sans" fontWeight="600" fontSize="16">3</text>
        </svg>
      </TrayCell>
      <ShowDesktop />
    </Tray>
  </Taskbar>
);

export default function App() {
  return (
    <Screen>
      <GlobalStyle />
      <BrowserChrome />
      <Editor>
        <Sidebar />
        <Canvas>
          <Drawing />
          <Dock />
        </Canvas>
        <Inspector />
      </Editor>
      <WindowsTaskbar />
    </Screen>
  );
}
